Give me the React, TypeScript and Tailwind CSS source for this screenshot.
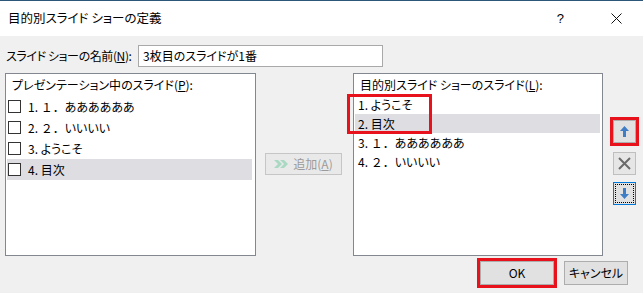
import React from 'react';

// 全角部分はpaltを外して元の字幅のまま表示
const Wide = ({ children }: { children: React.ReactNode }) => (
    <span className="[font-feature-settings:normal]">{children}</span>
);

const leftSlides: React.ReactNode[] = [
    <>1. <Wide>１．</Wide>ああああああ</>,
    <>2. <Wide>２．</Wide>いいいい</>,
    <>3. ようこそ</>,
    <>4. 目次</>,
];

const rightSlides: React.ReactNode[] = [
    <>1. ようこそ</>,
    <>2. 目次</>,
    <>3. <Wide>１．</Wide>ああああああ</>,
    <>4. <Wide>２．</Wide>いいいい</>,
];

const UpArrow = () => (
    <svg width="9" height="11" viewBox="0 0 9 11">
        <path d="M4.5 0 L9 5 L6 5 L6 11 L3 11 L3 5 L0 5 Z" fill="#3f7ec6" />
    </svg>
);

const DownArrow = () => (
    <svg width="9" height="11" viewBox="0 0 9 11">
        <path d="M4.5 11 L9 6 L6 6 L6 0 L3 0 L3 6 L0 6 Z" fill="#3f7ec6" />
    </svg>
);

const App = () => {
    return (
        <div className="w-[643px] h-[293px] overflow-hidden bg-[#f0f0f0] flex flex-col text-[12px] text-black font-['Noto_Sans_CJK_JP',sans-serif] [font-feature-settings:'palt']">
            {/* タイトルバー */}
            <div className="h-[36px] shrink-0 bg-white border-t border-[#2c5779] flex items-center">
                <span className="pl-[8px] text-[12.5px]">目的別スライド ショーの定義</span>
                <span className="ml-auto text-[13px] font-['Liberation_Sans',sans-serif]">?</span>
                <svg className="ml-[47px] mr-[21px]" width="11" height="11" viewBox="0 0 11 11">
                    <path d="M0.5 0.5 L10.5 10.5 M10.5 0.5 L0.5 10.5" stroke="#111" strokeWidth="1" />
                </svg>
            </div>

            {/* 名前 */}
            <div className="flex items-center mt-[9px] h-[22px]">
                <span className="pl-[6px] w-[138px] tracking-[-0.4px]">
                    スライド ショーの名前(<span className="underline">N</span>):
                </span>
                <div className="w-[245px] h-[22px] bg-white border border-[#a9a9a9] flex items-center pl-[4px]">
                    3枚目のスライドが1番
                </div>
            </div>

            {/* リスト */}
            <div className="flex mt-[6px] h-[183px]">
                <div className="ml-[5px] w-[251px] h-full bg-white border border-[#838790] flex flex-col">
                    <div className="h-[22px] flex items-center pl-[6px]">
                        プレゼンテーション中のスライド(<span className="underline">P</span>):
                    </div>
                    {leftSlides.map((s, i) => (
                        <div
                            key={i}
                            className={`h-[21px] flex items-center ml-[1px] mr-[3px] ${i === 3 ? 'bg-[#dedee2]' : ''}`}
                        >
                            <span className="ml-[1px] w-[13px] h-[13px] border border-[#333] bg-white" />
                            <span className="ml-[7px]">{s}</span>
                        </div>
                    ))}
                </div>

                <div className="w-[97px]">
                    <div className="ml-[9px] mt-[80px] w-[77px] h-[22px] bg-[#e9e9e9] border border-[#c6c6c6] flex items-center justify-center gap-[5px] text-[#9b9b9b]">
                        <svg width="14" height="8" viewBox="0 0 14 8">
                            <path d="M0 0 L4 0 L8 4 L4 8 L0 8 L4 4 Z M6 0 L10 0 L14 4 L10 8 L6 8 L10 4 Z" fill="#a9d9c3" />
                        </svg>
                        <span>
                            追加(<span className="underline">A</span>)
                        </span>
                    </div>
                </div>

                <div className="relative w-[250px] h-full bg-white border border-[#838790] flex flex-col">
                    <div className="h-[21px] flex items-center pl-[6px]">
                        目的別スライド ショーのスライド(<span className="underline">L</span>):
                    </div>
                    {rightSlides.map((s, i) => (
                        <div
                            key={i}
                            className={`h-[19px] flex items-center ml-[1px] mr-[2px] pl-[3px] ${i === 1 ? 'bg-[#dedee2]' : ''}`}
                        >
                            <span>{s}</span>
                        </div>
                    ))}
                    {/* 赤枠 */}
                    <div className="absolute left-[-7px] top-[20px] w-[85px] h-[40px] border-[3px] border-[#e8121c]" />
                </div>

                <div className="ml-[7px] flex flex-col">
                    <div className="mt-[44px] w-[29px] h-[29px] border-[3px] border-[#e8121c]">
                        <div className="w-[23px] h-[23px] bg-[#e1e1e1] border border-[#adadad] flex items-center justify-center">
                            <UpArrow />
                        </div>
                    </div>
                    <div className="ml-[3px] mt-[6px] w-[23px] h-[23px] bg-[#e6e6e6] border border-[#bfbfbf] flex items-center justify-center">
                        <svg width="13" height="13" viewBox="0 0 13 13">
                            <path d="M1 1 L12 12 M12 1 L1 12" stroke="#6b6b6b" strokeWidth="2" />
                        </svg>
                    </div>
                    <div className="ml-[3px] mt-[7px] w-[23px] h-[23px] bg-[#e1e1e1] border border-[#0078d7] p-[1px]">
                        <div className="w-full h-full border border-dotted border-black flex items-center justify-center">
                            <DownArrow />
                        </div>
                    </div>
                </div>
            </div>

            {/* OK / キャンセル */}
            <div className="flex justify-end items-center mt-[2px] pr-[15px]">
                <div className="w-[80px] h-[30px] border-[3px] border-[#e8121c]">
                    <button className="w-full h-full bg-[#e1e1e1] border border-[#adadad] flex items-center justify-center">
                        OK
                    </button>
                </div>
                <button className="ml-[7px] w-[64px] h-[24px] bg-[#e1e1e1] border border-[#adadad] flex items-center justify-center">
                    キャンセル
                </button>
            </div>
        </div>
    );
};

export default App;
